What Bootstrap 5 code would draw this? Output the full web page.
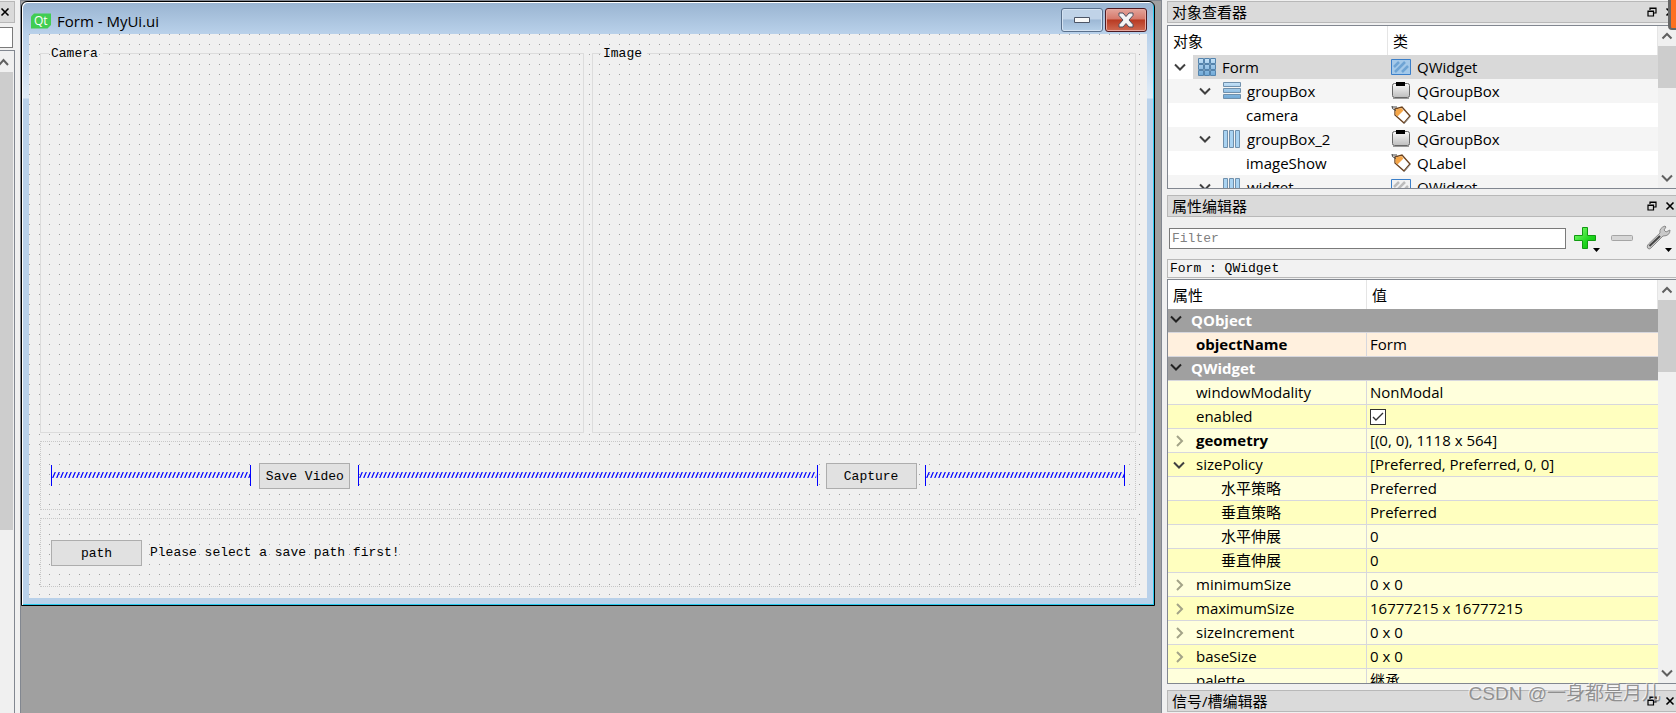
<!DOCTYPE html>
<html lang="zh-CN">
<head>
<meta charset="utf-8">
<meta name="viewport" content="width=device-width, initial-scale=1">
<title>Form - MyUi.ui</title>
<link href="https://cdn.jsdelivr.net/npm/bootstrap@5.3.0/dist/css/bootstrap.min.css" rel="stylesheet">
<style>
  body { background: #f0f0f0; color: #000; font: 15px/24px "Open Sans", "Noto Sans CJK SC", sans-serif; }
  .pixel { font: 13px/16px "Liberation Mono", "Noto Sans CJK SC", monospace; }
  .ide { height: 100vh; min-height: 640px; }
  svg { display: block; flex: none; }

  /* left dock remnant */
  .left-dock { flex: 0 0 15px; }
  .left-dock .dock-x { height: 22px; margin-top: 1px; background: #dadada; border: solid #b8b8b8; border-width: 1px 1px 1px 0; }
  .left-dock .edge-input { height: 21px; margin: 4px 2px 2px 0; width: 13px; background: #fff; border: 1px solid #7a7a7a; border-left: 0; padding: 0; border-radius: 0; }
  .left-dock .edge-scroll { border: solid #828790; border-width: 1px 1px 0 0; padding-right: 1px; }
  .edge-thumb { flex: 458 0 0; background: #cdcdcd; }
  .edge-rest { flex: 183 0 0; }

  /* workspace */
  .workspace { background: #a0a0a0; border: solid #828790; border-width: 1px 1px 0; margin-left: 5px; padding-right: 6px; min-width: 0; }
  .form-window { border: 1px solid #000; border-radius: 6px 6px 0 0; padding: 0 7px 7px; box-shadow: inset 1px 1px #fff, inset -1px -1px #28c8ec;
    background: linear-gradient(#99b4d1 0, #b9d1ea 32px, #dfebf7 96px, #b9d1ea 97px); }
  .window-title { height: 32px; padding: 6px 0 2px 2px; gap: 2px; }
  .window-name { padding: 2px 0 0 4px; line-height: 22px; }
  .qt-logo { margin-top: 5px; }
  .win-btn { width: 42px; height: 24px; border: 1px solid #59708c; border-radius: 3px; padding: 0; display: flex; align-items: center; justify-content: center;
    box-shadow: inset 0 0 0 1px #d5e3f2; background: linear-gradient(#c0d3e8 45%, #9db8d5 50%, #b5cfe8); }
  .win-close { border-color: #4d1a22; box-shadow: inset 0 0 0 1px #e9a9a0; background: linear-gradient(#e3a49a 0, #d6796b 45%, #b83a22 50%, #cf6a52); }
  .canvas { padding: 11px; background: conic-gradient(from 0deg at 1px 1px, #f0f0f0 270deg, #a0a0a0 270deg) 0 0 / 10px 10px; }
  .group-frame { min-height: 388px; border: 1px solid #dcdcdc; margin: 0; padding: 0 8px; flex: 1 1 0; min-width: 0; }
  .group-frame legend { float: none; width: auto; margin: 0; padding: 1px 5px 0 2px; line-height: 15px; }
  .dotted-frame { border: 1px dotted #c8c8c8; padding: 0 10px; min-height: 69px; }
  .tool-btn { width: 91px; height: 26px; padding: 2px 0 0; border: 1px solid #adadad; border-radius: 0; background: #e1e1e1; color: #000; }
  .spacer-h { height: 21px; border: solid #00f; border-width: 0 1px; min-width: 0; }
  .spacer-side { flex: 200 0 0; }
  .spacer-mid { flex: 461 0 0; }

  /* docks */
  .docks { flex: 0 0 514px; padding: 1px 0 1px 5px; min-width: 0; }
  .dock-title { height: 22px; flex: none; background: #dadada; border: 1px solid #b8b8b8; border-right: 0; padding: 0 1px 0 4px; }
  .view + .dock-title { margin-top: 6px; }
  .dock-title h2 { font-size: 15px; line-height: 20px; margin: 0; font-weight: 400; }
  .icon-btn { border: 0; background: none; padding: 0; color: #000; display: flex; }
  .view { border: solid #828790; border-width: 1px 0 1px 1px; background: #fff; min-height: 0; }
  .object-view { flex: 0 0 164px; margin-top: 2px; }
  .prop-view { flex: 1 1 0; margin-top: 1px; }
  .rows { overflow: hidden; min-width: 0; }
  .grid-table { width: 100%; table-layout: fixed; border-collapse: separate; border-spacing: 0; }
  .grid-table th, .grid-table td { height: 24px; padding: 0; font-weight: 400; line-height: 23px; white-space: nowrap; overflow: hidden; }
  .grid-table thead th { height: 29px; padding: 2px 5px 0; border-right: 1px solid #e5e5e5; }
  .cell { display: flex; align-items: center; height: 100%; }
  .object-view td { padding-left: 3px; }
  .object-view tr.alt td { background: #f5f5f5; }
  .object-view .picked td { background: #d9d9d9; }
  .object-view .picked td:first-child { background: linear-gradient(90deg, #fff 25px, #d9d9d9 25px); }
  .object-view .name-col { width: 220px; }
  .prop-view .name-col { width: 199px; }
  .twist { width: 12px; margin: 0 11px 0 3px; color: #404040; }
  .lvl1 { padding-left: 25px; }
  .lvl2 { padding-left: 75px; }
  .ico { width: 20px; height: 20px; margin-right: 5px; }
  .ico-type { margin-right: 6px; }
  .prop-view td { border-bottom: 1px solid #d7d7dd; }
  .prop-view td:first-child:not([colspan]) { border-right: 1px solid #d7d7dd; }
  .prop-view td + td { padding-left: 3px; }
  .prop-view .section td { background: #a0a0a0; color: #fff; font-weight: 700; }
  .prop-view .section .twist { margin: 0 9px 4px 2px; color: #222; }
  .prop-view .named td { background: #fff0de; }
  .prop-view .pale td { background: #ffffdc; }
  .prop-view .deep td { background: #ffffbf; }
  .prop-view .changed td:first-child { font-weight: 700; }
  .prop-view .twist { margin: 0 11px 0 5px; }
  .prop-view .shut { color: #a3a388; }
  .p1 { padding-left: 28px; }
  .p2 { padding-left: 53px; }
  .check-box { appearance: none; width: 16px; height: 16px; border: 1px solid #333; margin: 0; display: block;
    background: #fff url("data:image/svg+xml,%3Csvg xmlns='http://www.w3.org/2000/svg' viewBox='0 0 14 14'%3E%3Cpath d='M2 7l3 3 7-7' fill='none' stroke='%23333' stroke-width='1.4'/%3E%3C/svg%3E"); }
  .scroll { flex: 0 0 18px; background: #f0f0f0; color: #606060; }
  .scroll svg { margin-left: 3px; }
  .thumb { background: #cdcdcd; margin-top: 4px; }
  .filter-row { height: 36px; flex: none; padding: 0 4px 0 2px; margin: 3px 0; }
  .filter-box { height: 21px; border: 1px solid #7a7a7a; border-radius: 0; padding: 0 2px; background: #fff; min-width: 0; flex: 1 1 auto; }
  .filter-box::placeholder { color: #808080; opacity: 1; }
  .wrench { margin-left: 12px; }
  .crumb { height: 19px; flex: none; border: 1px solid #b8b8b8; border-right: 0; padding-left: 2px; line-height: 18px; background: #f2f2f2; }
  .corner-tab { position: absolute; top: 0; right: 0; width: 8px; height: 30px; background: #ff7020; border: solid #666; border-width: 0 0 2px 3px; border-radius: 0 0 0 4px; }
  .watermark { position: absolute; right: 15px; bottom: 5px; font: 19px/28px "Liberation Sans", "Noto Sans CJK SC", sans-serif; color: rgba(130,130,130,.85); text-shadow: -1px -1px rgba(255,255,255,.6); pointer-events: none; }
</style>
</head>
<body class="overflow-hidden">
<svg width="0" height="0" class="position-absolute" aria-hidden="true">
  <defs>
    <linearGradient id="blueV" x1="0" y1="0" x2="0" y2="1"><stop offset="0" stop-color="#c5e2f8"/><stop offset="1" stop-color="#6fa8d6"/></linearGradient>
    <linearGradient id="grayV" x1="0" y1="0" x2="0" y2="1"><stop offset="0" stop-color="#fafafa"/><stop offset="1" stop-color="#bdbdbd"/></linearGradient>
    <linearGradient id="greenV" x1="0" y1="0" x2="1" y2="1"><stop offset="0" stop-color="#8dff7a"/><stop offset=".6" stop-color="#1fd81f"/><stop offset="1" stop-color="#0ab50a"/></linearGradient>
    <pattern id="zig" width="4" height="6" patternUnits="userSpaceOnUse" y="7"><path d="M.7 6L3.300 0" stroke="#00f" stroke-width="1.200" fill="none"/></pattern>
    <symbol id="down" viewBox="0 0 12 12"><path d="M1 3.500L6 8.500l5-5" fill="none" stroke="currentColor" stroke-width="2"/></symbol>
    <symbol id="up" viewBox="0 0 12 12"><path d="M1.500 8.500L6 4l4.500 4.500" fill="none" stroke="currentColor" stroke-width="2"/></symbol>
    <symbol id="right" viewBox="0 0 12 12"><path d="M4 1l5 5-5 5" fill="none" stroke="currentColor" stroke-width="2"/></symbol>
    <symbol id="cross" viewBox="0 0 10 10"><path d="M1.500 1.500l7 7M8.500 1.500l-7 7" fill="none" stroke="#000" stroke-width="1.600"/></symbol>
    <symbol id="float" viewBox="0 0 10 10"><path d="M3 3V1h6v5H7M3 1.500h6" fill="none" stroke="#000" stroke-width="1.200"/><path d="M1 4h5.500v5H1zM1 4.500h5.500" fill="none" stroke="#000" stroke-width="1.200"/></symbol>
    <symbol id="gridIco" viewBox="0 0 20 20"><g fill="url(#blueV)" stroke="#5584ad"><path d="M1.500 1.500h5v5h-5zM7.500 1.500h5v5h-5zM13.500 1.500h5v5h-5zM1.500 7.500h5v5h-5zM7.500 7.500h5v5h-5zM13.500 7.500h5v5h-5zM1.500 13.500h5v5h-5zM7.500 13.500h5v5h-5zM13.500 13.500h5v5h-5z"/></g></symbol>
    <symbol id="rowsIco" viewBox="0 0 20 20"><g fill="url(#blueV)" stroke="#7090ac"><path d="M1.500 1.500h17v4h-17zM1.500 7.500h17v4h-17zM1.500 13.500h17v4h-17z"/></g></symbol>
    <symbol id="colsIco" viewBox="0 0 20 20"><g fill="#a9d3f2" stroke="#7090ac"><path d="M1.500 1.500h4v17h-4zM7.500 1.500h4v17h-4zM13.500 1.500h4v17h-4z"/></g></symbol>
    <symbol id="widgetBlue" viewBox="0 0 20 20"><path d="M.5 2.500h19v15H.5z" fill="#a4c9e9" stroke="#3b7fc9"/><path d="M3 10l5-5M4 15L14 5M11 15l6-6" stroke="#6ea4d4" stroke-width="2.500"/></symbol>
    <symbol id="widgetGray" viewBox="0 0 20 20"><path d="M.5 2.500h19v15H.5z" fill="#f2f2f2" stroke="#3b7fc9"/><path d="M3 10l5-5M4 15L14 5M11 15l6-6" stroke="#bcbcbc" stroke-width="2.500"/></symbol>
    <symbol id="boxIco" viewBox="0 0 20 20"><rect x="1.500" y="2.500" width="17" height="14" rx="2" fill="url(#grayV)" stroke="#666"/><path d="M2 17.500h16" stroke="#999"/><path d="M5 1h9v4H5z"/></symbol>
    <symbol id="tagIco" viewBox="0 0 20 20"><path d="M4 4l7-2 8 9-6 7-9-8z" fill="#fff" stroke="#6b4320" stroke-width="1.400"/><path d="M4.500 4.500L10.500 3l2 2.500-6 6-2-2z" fill="#f5a648"/><path d="M1 1q-1 3 4 4.500M1 2h5" stroke="#444" fill="none"/><path d="M13 19l6-7" stroke="#9a9a9a"/></symbol>
  </defs>
</svg>

<div class="ide d-flex position-relative">
  <aside class="left-dock d-flex flex-column">
    <div class="dock-x d-flex align-items-center"><button class="icon-btn" aria-label="关闭"><svg width="10" height="10"><use href="#cross"/></svg></button></div>
    <input class="edge-input" aria-label="过滤">
    <div class="edge-scroll d-flex flex-column flex-grow-1">
      <svg width="12" height="21" viewBox="0 0 12 21" fill="none" stroke="#606060" stroke-width="2"><path d="M-1 14l4.500-5L8 14"/></svg>
      <div class="edge-thumb"></div><div class="edge-rest"></div>
    </div>
  </aside>

  <main class="workspace flex-grow-1">
    <section class="form-window">
      <header class="window-title d-flex align-items-start">
        <svg class="qt-logo" width="20" height="16" viewBox="0 0 20 16"><path d="M3 .5h17v11.500l-3.500 3.500H0V3.500z" fill="#41cd52"/><text x="3" y="12" font-family="Open Sans" font-size="12" fill="#fff">Qt</text></svg>
        <span class="window-name flex-grow-1">Form - MyUi.ui</span>
        <button class="win-btn" aria-label="最小化"><svg width="18" height="8"><path d="M1.500 1.500h15v5h-15z" fill="#f8f8f8" stroke="#4c5566"/></svg></button>
        <button class="win-btn win-close" aria-label="关闭"><svg width="18" height="16" viewBox="0 0 18 16"><path d="M2 1h4l3 3.500L12 1h4v2.500L12 8l4 4.500V15h-4l-3-3.500L6 15H2v-2.500L6 8 2 3.500z" fill="#f4f4f4" stroke="#4b4f60"/></svg></button>
      </header>
      <form class="canvas pixel" onsubmit="return false">
        <div class="d-flex gap-2">
          <fieldset class="group-frame"><legend class="pixel">Camera</legend></fieldset>
          <fieldset class="group-frame"><legend class="pixel">Image</legend></fieldset>
        </div>
        <div class="dotted-frame d-flex align-items-center gap-2 mt-2">
          <div class="spacer-h spacer-side"><svg width="100%" height="21"><rect y="7" width="100%" height="6" fill="url(#zig)"/></svg></div>
          <button class="tool-btn">Save Video</button>
          <div class="spacer-h spacer-mid"><svg width="100%" height="21"><rect y="7" width="100%" height="6" fill="url(#zig)"/></svg></div>
          <button class="tool-btn">Capture</button>
          <div class="spacer-h spacer-side"><svg width="100%" height="21"><rect y="7" width="100%" height="6" fill="url(#zig)"/></svg></div>
        </div>
        <div class="dotted-frame d-flex align-items-center gap-2 mt-2">
          <button class="tool-btn" id="path-btn">path</button>
          <label for="path-btn">Please select a save path first!</label>
        </div>
      </form>
    </section>
  </main>

  <aside class="docks d-flex flex-column">
    <div class="dock-title d-flex align-items-center"><h2 class="flex-grow-1">对象查看器</h2>
      <button class="icon-btn me-2" aria-label="浮动"><svg width="10" height="10"><use href="#float"/></svg></button>
      <button class="icon-btn" aria-label="关闭"><svg width="10" height="10"><use href="#cross"/></svg></button></div>
    <div class="view object-view d-flex">
      <div class="rows flex-grow-1">
        <table class="grid-table">
          <colgroup><col class="name-col"><col></colgroup>
          <thead><tr><th scope="col">对象</th><th scope="col">类</th></tr></thead>
          <tbody>
            <tr class="picked"><td><div class="cell"><svg class="twist" height="12"><use href="#down"/></svg><svg class="ico"><use href="#gridIco"/></svg>Form</div></td><td><div class="cell"><svg class="ico ico-type"><use href="#widgetBlue"/></svg>QWidget</div></td></tr>
            <tr class="alt"><td><div class="cell lvl1"><svg class="twist" height="12"><use href="#down"/></svg><svg class="ico"><use href="#rowsIco"/></svg>groupBox</div></td><td><div class="cell"><svg class="ico ico-type"><use href="#boxIco"/></svg>QGroupBox</div></td></tr>
            <tr><td><div class="cell lvl2">camera</div></td><td><div class="cell"><svg class="ico ico-type"><use href="#tagIco"/></svg>QLabel</div></td></tr>
            <tr class="alt"><td><div class="cell lvl1"><svg class="twist" height="12"><use href="#down"/></svg><svg class="ico"><use href="#colsIco"/></svg>groupBox_2</div></td><td><div class="cell"><svg class="ico ico-type"><use href="#boxIco"/></svg>QGroupBox</div></td></tr>
            <tr><td><div class="cell lvl2">imageShow</div></td><td><div class="cell"><svg class="ico ico-type"><use href="#tagIco"/></svg>QLabel</div></td></tr>
            <tr class="alt"><td><div class="cell lvl1"><svg class="twist" height="12"><use href="#down"/></svg><svg class="ico"><use href="#colsIco"/></svg>widget</div></td><td><div class="cell"><svg class="ico ico-type"><use href="#widgetGray"/></svg>QWidget</div></td></tr>
          </tbody>
        </table>
      </div>
      <div class="scroll d-flex flex-column"><svg class="mt-1" width="12" height="12"><use href="#up"/></svg><div class="thumb" style="height:42px"></div><svg class="mt-auto mb-1" width="12" height="12"><use href="#down"/></svg></div>
    </div>

    <div class="dock-title d-flex align-items-center"><h2 class="flex-grow-1">属性编辑器</h2>
      <button class="icon-btn me-2" aria-label="浮动"><svg width="10" height="10"><use href="#float"/></svg></button>
      <button class="icon-btn" aria-label="关闭"><svg width="10" height="10"><use href="#cross"/></svg></button></div>
    <div class="filter-row d-flex align-items-center">
      <input class="filter-box pixel" type="text" placeholder="Filter" aria-label="Filter">
      <button class="icon-btn ms-2" aria-label="添加"><svg width="28" height="28" viewBox="0 0 28 28"><path d="M8.500 3.500h5v8h8v5h-8v8h-5v-8h-8v-5h8z" fill="url(#greenV)" stroke="#119a11"/><path d="M19 24h7l-3.500 4z"/></svg></button>
      <button class="icon-btn ms-2" aria-label="删除"><svg width="24" height="28" viewBox="0 0 24 28"><rect x="1.500" y="11.500" width="21" height="5" rx="1" fill="#d6d6d6" stroke="#a5a5a5"/></svg></button>
      <button class="icon-btn wrench" aria-label="配置"><svg width="26" height="28" viewBox="0 0 26 28"><path d="M1.500 24q-1-2 1-4L14 9q-1-5 5-7l1 1-2 3 2 2 4-2q0 6-7 6L5 24q-2 2-3.500 0z" fill="#c9c9c9" stroke="#8a8a8a"/><path d="M3.500 22L14 12" stroke="#444" stroke-width="2"/><path d="M19 24h7l-3.500 4z"/></svg></button>
    </div>
    <div class="crumb pixel">Form : QWidget</div>
    <div class="view prop-view d-flex">
      <div class="rows flex-grow-1">
        <table class="grid-table">
          <colgroup><col class="name-col"><col></colgroup>
          <thead><tr><th scope="col">属性</th><th scope="col">值</th></tr></thead>
          <tbody>
            <tr class="section"><td colspan="2"><div class="cell"><svg class="twist" height="12"><use href="#down"/></svg>QObject</div></td></tr>
            <tr class="named changed"><td><div class="cell p1">objectName</div></td><td>Form</td></tr>
            <tr class="section"><td colspan="2"><div class="cell"><svg class="twist" height="12"><use href="#down"/></svg>QWidget</div></td></tr>
            <tr class="pale"><td><div class="cell p1">windowModality</div></td><td>NonModal</td></tr>
            <tr class="deep"><td><div class="cell p1"><label for="enabled">enabled</label></div></td><td><input class="check-box" type="checkbox" id="enabled" checked></td></tr>
            <tr class="pale changed"><td><div class="cell"><svg class="twist shut" height="12"><use href="#right"/></svg>geometry</div></td><td>[(0, 0), 1118 x 564]</td></tr>
            <tr class="deep"><td><div class="cell"><svg class="twist" height="12"><use href="#down"/></svg>sizePolicy</div></td><td>[Preferred, Preferred, 0, 0]</td></tr>
            <tr class="pale"><td><div class="cell p2">水平策略</div></td><td>Preferred</td></tr>
            <tr class="deep"><td><div class="cell p2">垂直策略</div></td><td>Preferred</td></tr>
            <tr class="pale"><td><div class="cell p2">水平伸展</div></td><td>0</td></tr>
            <tr class="deep"><td><div class="cell p2">垂直伸展</div></td><td>0</td></tr>
            <tr class="pale"><td><div class="cell"><svg class="twist shut" height="12"><use href="#right"/></svg>minimumSize</div></td><td>0 x 0</td></tr>
            <tr class="deep"><td><div class="cell"><svg class="twist shut" height="12"><use href="#right"/></svg>maximumSize</div></td><td>16777215 x 16777215</td></tr>
            <tr class="pale"><td><div class="cell"><svg class="twist shut" height="12"><use href="#right"/></svg>sizeIncrement</div></td><td>0 x 0</td></tr>
            <tr class="deep"><td><div class="cell"><svg class="twist shut" height="12"><use href="#right"/></svg>baseSize</div></td><td>0 x 0</td></tr>
            <tr class="pale"><td><div class="cell p1">palette</div></td><td>继承</td></tr>
          </tbody>
        </table>
      </div>
      <div class="scroll d-flex flex-column"><svg class="mt-1" width="12" height="12"><use href="#up"/></svg><div class="thumb" style="height:72px"></div><svg class="mt-auto mb-1" width="12" height="12"><use href="#down"/></svg></div>
    </div>
    <div class="dock-title d-flex align-items-center"><h2 class="flex-grow-1">信号/槽编辑器</h2>
      <button class="icon-btn me-2" aria-label="浮动"><svg width="10" height="10"><use href="#float"/></svg></button>
      <button class="icon-btn" aria-label="关闭"><svg width="10" height="10"><use href="#cross"/></svg></button></div>
  </aside>
  <div class="corner-tab"></div>
  <div class="watermark">CSDN @一身都是月儿</div>
</div>
<script src="https://cdn.jsdelivr.net/npm/bootstrap@5.3.0/dist/js/bootstrap.bundle.min.js"></script>
</body>
</html>
